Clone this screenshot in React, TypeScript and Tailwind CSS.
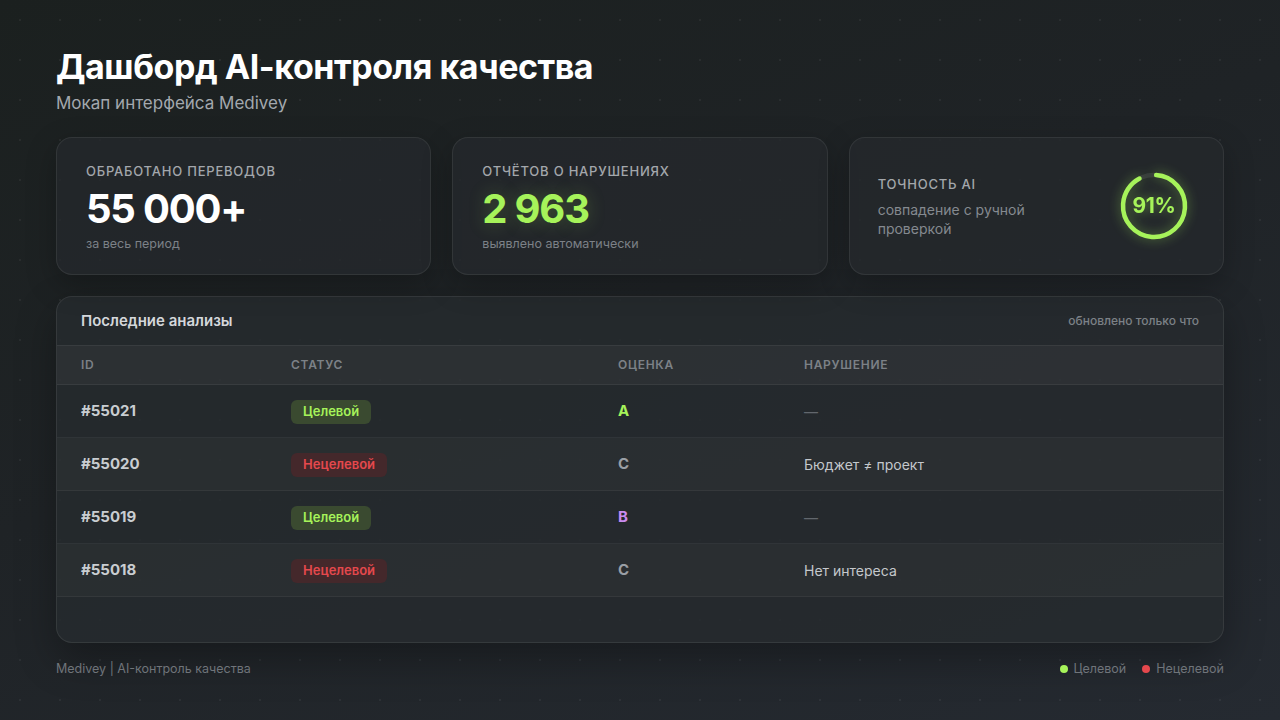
type Row = {
  id: string;
  target: boolean;
  grade: "A" | "B" | "C";
  violation: string;
};

const rows: Row[] = [
  { id: "#55021", target: true, grade: "A", violation: "—" },
  { id: "#55020", target: false, grade: "C", violation: "Бюджет ≠ проект" },
  { id: "#55019", target: true, grade: "B", violation: "—" },
  { id: "#55018", target: false, grade: "C", violation: "Нет интереса" },
];

const gradeColor: Record<Row["grade"], string> = {
  A: "text-[#a6f35a]",
  B: "text-[#c98bf0]",
  C: "text-[#9a9fa5]",
};

const StatCard = ({ label, value, note, accent }: { label: string; value: string; note: string; accent?: boolean }) => (
  <div className="h-[138px] rounded-2xl border border-white/[0.07] bg-[#24282c]/80 px-[29px] pt-[25px] shadow-[0_10px_30px_rgba(0,0,0,0.25)]">
    <div className="text-[13px] leading-4 font-medium uppercase tracking-[0.06em] text-[#a3a7ac]">{label}</div>
    <div
      className={`mt-[8px] text-[40px] leading-[44px] font-bold tracking-[-0.03em] ${
        accent ? "text-[#a6f35a] [text-shadow:0_0_18px_rgba(166,243,90,0.25)]" : "text-white"
      }`}
    >
      {value}
    </div>
    <div className="mt-[5px] text-[12.5px] leading-4 text-[#7c8187]">{note}</div>
  </div>
);

const Ring = ({ pct }: { pct: number }) => {
  const r = 31;
  const c = 2 * Math.PI * r;
  return (
    <div className="relative h-[72px] w-[72px] drop-shadow-[0_0_6px_rgba(166,243,90,0.45)]">
      <svg width="72" height="72" viewBox="0 0 72 72" className="-rotate-90">
        <circle cx="36" cy="36" r={r} fill="none" stroke="rgba(255,255,255,0.08)" strokeWidth="4.5" />
        <circle
          cx="36"
          cy="36"
          r={r}
          fill="none"
          stroke="#a6f35a"
          strokeWidth="4.5"
          strokeLinecap="round"
          strokeDasharray={`${(c * pct) / 100} ${c}`}
          transform="rotate(4 36 36)"
        />
      </svg>
      <div className="absolute inset-0 flex items-center justify-center text-[21px] font-bold tracking-[-0.02em] text-[#a6f35a]">
        {pct}%
      </div>
    </div>
  );
};

const Badge = ({ target }: { target: boolean }) =>
  target ? (
    <span className="inline-flex h-6 items-center rounded-md bg-[#3a4a30] px-3 text-[13px] font-semibold text-[#a6f35a]">
      Целевой
    </span>
  ) : (
    <span className="inline-flex h-6 items-center rounded-md bg-[#44282b] px-3 text-[13px] font-semibold text-[#e5484d]">
      Нецелевой
    </span>
  );

export default function App() {
  return (
    <div
      className="min-h-[720px] h-screen w-full overflow-hidden bg-[linear-gradient(160deg,#1b201f_0%,#1f2326_45%,#252a31_100%)] font-['Inter','Noto_Sans',sans-serif]"
    >
      <div className="h-full w-full bg-[radial-gradient(rgba(255,255,255,0.05)_1px,transparent_1.2px)] bg-[length:40px_40px] px-[56px] pt-[47px]">
        <h1 className="text-[34px] leading-[40px] font-bold tracking-[-0.013em] text-white">Дашборд AI-контроля качества</h1>
        <p className="mt-[5px] text-[17px] leading-[22px] text-[#a3a8ae]">Мокап интерфейса Medivey</p>

        <div className="mt-[23px] grid grid-cols-3 gap-[21px]">
          <StatCard label="Обработано переводов" value="55 000+" note="за весь период" />
          <StatCard label="Отчётов о нарушениях" value="2 963" note="выявлено автоматически" accent />
          <div className="flex h-[138px] items-center justify-between rounded-2xl border border-white/[0.07] bg-[#24282c]/80 pl-[28px] pr-[33px] shadow-[0_10px_30px_rgba(0,0,0,0.25)]">
            <div className="pt-[2px]">
              <div className="text-[13px] leading-4 font-medium uppercase tracking-[0.06em] text-[#a3a7ac]">Точность AI</div>
              <div className="mt-[8px] text-[14px] leading-[19px] text-[#858a90]">
                совпадение с ручной
                <br />
                проверкой
              </div>
            </div>
            <Ring pct={91} />
          </div>
        </div>

        <div className="mt-[21px] h-[347px] overflow-hidden rounded-2xl border border-white/[0.08] bg-[#262a2e]/85 shadow-[0_16px_40px_rgba(0,0,0,0.3)]">
          <div className="flex h-[48px] items-center justify-between px-[24px]">
            <div className="text-[15px] font-semibold text-[#d4d7db]">Последние анализы</div>
            <div className="text-[12px] font-medium text-[#7c8187]">обновлено только что</div>
          </div>
          <div className="grid h-10 grid-cols-[210px_327px_186px_1fr] items-center border-y border-white/[0.06] bg-white/[0.035] px-[24px] text-[12px] font-semibold uppercase tracking-[0.06em] text-[#7c8187]">
            <div>ID</div>
            <div>Статус</div>
            <div>Оценка</div>
            <div>Нарушение</div>
          </div>
          {rows.map((row, i) => (
            <div
              key={row.id}
              className={`grid h-[53px] grid-cols-[210px_327px_186px_1fr] items-center border-b border-white/[0.05] px-[24px] ${
                i % 2 === 1 ? "bg-white/[0.025]" : ""
              }`}
            >
              <div className="text-[15px] font-bold text-[#c9cdd1]">{row.id}</div>
              <div>
                <Badge target={row.target} />
              </div>
              <div className={`text-[15px] font-bold ${gradeColor[row.grade]}`}>{row.grade}</div>
              <div className={`text-[14px] ${row.violation === "—" ? "text-[#62676d]" : "text-[#c4c8cc]"}`}>{row.violation}</div>
            </div>
          ))}
        </div>

        <div className="mt-[18px] flex items-center justify-between text-[12.5px] leading-4 text-[#6f747a]">
          <div>Medivey | AI-контроль качества</div>
          <div className="flex items-center gap-4">
            <div className="flex items-center gap-[6px]">
              <span className="h-2 w-2 rounded-full bg-[#a6f35a]" />
              Целевой
            </div>
            <div className="flex items-center gap-[6px]">
              <span className="h-2 w-2 rounded-full bg-[#e5484d]" />
              Нецелевой
            </div>
          </div>
        </div>
      </div>
    </div>
  );
}
